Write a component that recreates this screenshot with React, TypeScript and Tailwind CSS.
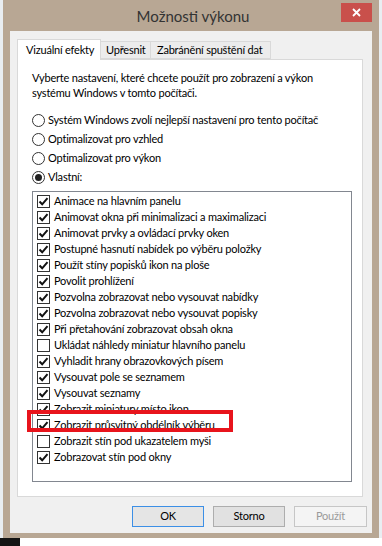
const items: { label: string; checked: boolean }[] = [
  { label: "Animace na hlavním panelu", checked: true },
  { label: "Animovat okna při minimalizaci a maximalizaci", checked: true },
  { label: "Animovat prvky a ovládací prvky oken", checked: true },
  { label: "Postupné hasnutí nabídek po výběru položky", checked: true },
  { label: "Použít stíny popisků ikon na ploše", checked: true },
  { label: "Povolit prohlížení", checked: true },
  { label: "Pozvolna zobrazovat nebo vysouvat nabídky", checked: true },
  { label: "Pozvolna zobrazovat nebo vysouvat popisky", checked: true },
  { label: "Při přetahování zobrazovat obsah okna", checked: true },
  { label: "Ukládat náhledy miniatur hlavního panelu", checked: false },
  { label: "Vyhladit hrany obrazovkových písem", checked: true },
  { label: "Vysouvat pole se seznamem", checked: true },
  { label: "Vysouvat seznamy", checked: true },
  { label: "Zobrazit miniatury místo ikon", checked: true },
  { label: "Zobrazit průsvitný obdélník výběru", checked: true },
  { label: "Zobrazit stín pod ukazatelem myši", checked: false },
  { label: "Zobrazovat stín pod okny", checked: true },
];

const radios = [
  { label: "Systém Windows zvolí nejlepší nastavení pro tento počítač", on: false },
  { label: "Optimalizovat pro vzhled", on: false },
  { label: "Optimalizovat pro výkon", on: false },
  { label: "Vlastní:", on: true },
];

function Check({ checked }: { checked: boolean }) {
  return (
    <div className="w-[13px] h-[13px] border border-[#333] bg-white flex items-center justify-center shrink-0">
      {checked && (
        <svg width="11" height="11" viewBox="0 0 11 11">
          <path d="M1.5 5.5 L4.2 8.3 L9.5 2.2" fill="none" stroke="#111" strokeWidth="2" />
        </svg>
      )}
    </div>
  );
}

function Radio({ on }: { on: boolean }) {
  return (
    <div className="w-[13px] h-[13px] rounded-full border border-[#333] bg-white flex items-center justify-center shrink-0">
      {on && <div className="w-[7px] h-[7px] rounded-full bg-[#222]" />}
    </div>
  );
}

export default function App() {
  return (
    <div
      className="w-[382px] h-[546px] bg-[#e9eef2] overflow-hidden flex flex-col text-[11px] tracking-[-0.2px] text-black"
      style={{ fontFamily: 'Lato, "Liberation Sans", sans-serif' }}
    >
      <div className="ml-[3px] w-[376px] h-[538px] bg-[#b8a794] flex flex-col px-[7px] pb-[5px] shrink-0">
        {/* title bar */}
        <div className="h-[31px] flex items-start relative shrink-0">
          <div className="flex-1 text-center text-[15px] tracking-normal text-[#333] pt-[5px] pl-[4px]">Možnosti výkonu</div>
          <div className="absolute right-0 top-[3px] w-[31px] h-[19px] bg-[#c9504b] flex items-center justify-center">
            <svg width="9" height="9" viewBox="0 0 9 9">
              <path d="M1 1 L8 8 M8 1 L1 8" stroke="#fff" strokeWidth="1.8" />
            </svg>
          </div>
        </div>
        {/* client */}
        <div className="flex-1 bg-[#f0f0f0] flex flex-col px-[7px] pt-[8px]">
          {/* tabs */}
          <div className="flex items-end h-[20px] relative z-10 whitespace-nowrap">
            <div className="h-[21px] w-[84px] bg-white border border-[#d9d9d9] border-b-0 flex items-center pl-[8px] -mb-px">
              Vizuální efekty
            </div>
            <div className="h-[18px] w-[50px] bg-[#ececec] border border-[#d9d9d9] border-l-0 flex items-center pl-[5px]">
              Upřesnit
            </div>
            <div className="h-[18px] w-[120px] bg-[#ececec] border border-[#d9d9d9] border-l-0 flex items-center pl-[6px]">
              Zabránění spuštění dat
            </div>
          </div>
          {/* panel */}
          <div className="w-[346px] h-[438px] bg-white border border-[#d9d9d9] flex flex-col pl-[14px] pt-[10px]">
            <p className="leading-[15px] w-[310px]">
              Vyberte nastavení, které chcete použít pro zobrazení a výkon systému Windows v tomto počítači.
            </p>
            <div className="flex flex-col mt-[14px] gap-[6px] whitespace-nowrap">
              {radios.map((r) => (
                <div key={r.label} className="flex items-center gap-[3px] h-[13px]">
                  <Radio on={r.on} />
                  <span>{r.label}</span>
                </div>
              ))}
            </div>
            <div className="relative mt-[7px] w-[320px] h-[291px] border border-[#828790] bg-white pt-[1px] pl-[4px] whitespace-nowrap">
              {items.map((it) => (
                <div key={it.label} className="flex items-center gap-[4px] h-[16px]">
                  <Check checked={it.checked} />
                  <span>{it.label}</span>
                </div>
              ))}
              <div className="absolute left-[-6px] top-[218px] w-[206px] h-[22px] border-[4px] border-[#e8141c]" />
            </div>
          </div>
          {/* buttons */}
          <div className="flex justify-end gap-[9px] mt-[9px] -mr-[2px]">
            <button className="w-[72px] h-[21px] bg-[#e5e5e5] border border-[#3c8fe6]">OK</button>
            <button className="w-[72px] h-[21px] bg-[#e1e1e1] border border-[#adadad]">Storno</button>
            <button className="w-[73px] h-[21px] bg-[#f4f4f4] border border-[#c6c6c6] text-[#9a9a9a]">Použít</button>
          </div>
        </div>
      </div>
      <div className="flex h-[8px] shrink-0">
        <div className="w-[20px] bg-[#141414]" />
        <div className="flex-1 bg-white" />
      </div>
    </div>
  );
}
